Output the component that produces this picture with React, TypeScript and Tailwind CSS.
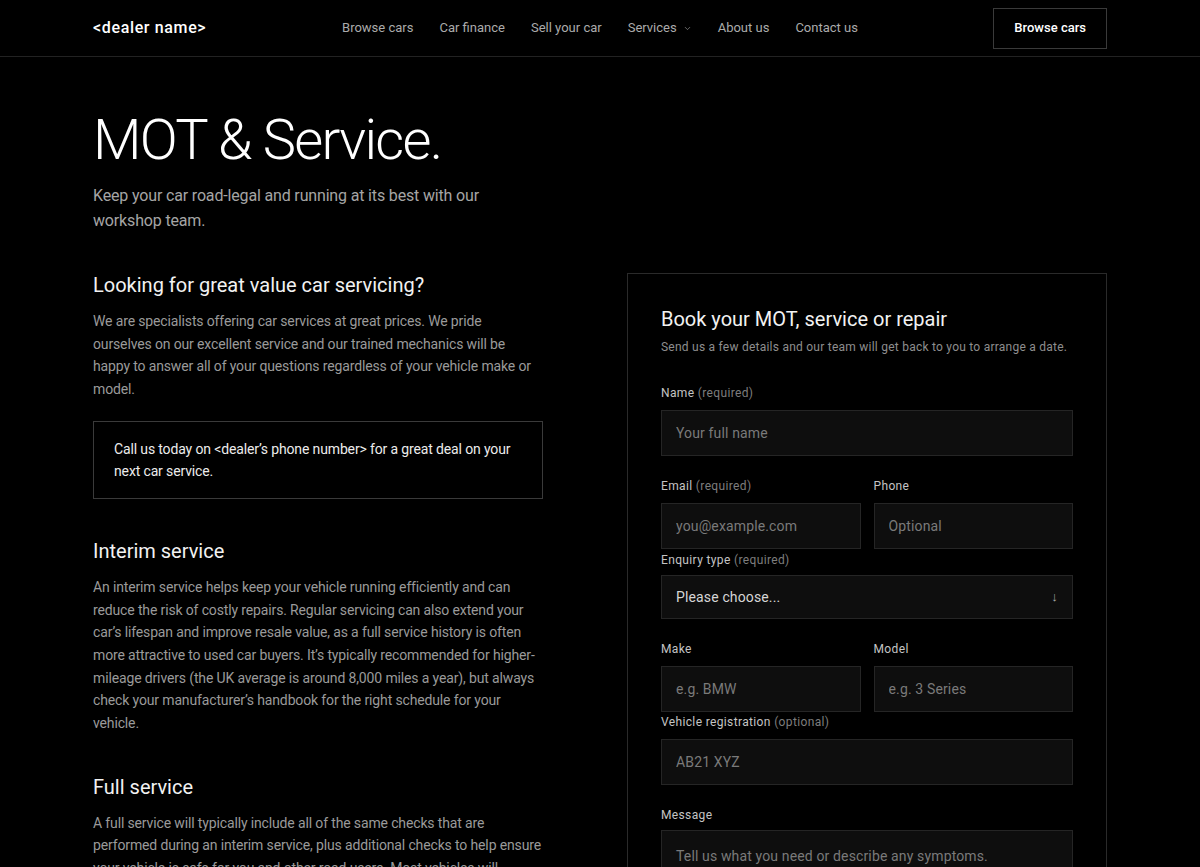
import { ChevronDown } from "lucide-react";

const navLinks = ["Browse cars", "Car finance", "Sell your car", "Services", "About us", "Contact us"];

function Label({ name, note, tight }: { name: string; note?: string; tight?: boolean }) {
  return (
    <label
      className={
        "block text-[12px] leading-4 text-[#c4c4c4] tracking-[0.03em] " + (tight ? "mb-[7px]" : "mb-[9px]")
      }
    >
      {name}
      {note && <span className="text-[#7d7d7d]"> {note}</span>}
    </label>
  );
}

function Field({ placeholder }: { placeholder: string }) {
  return (
    <input
      placeholder={placeholder}
      className="block w-full h-[46px] bg-[#0e0e0e] border border-[#252525] px-3.5 text-[14px] tracking-[0.01em] text-white placeholder:text-[#7a7a7a] outline-none"
    />
  );
}

function Header() {
  return (
    <header className="border-b border-[#222]">
      <div className="mx-auto w-[1014px] h-14 grid grid-cols-[1fr_auto_1fr] items-center">
        <a className="text-[16px] font-medium tracking-[0.04em] text-white">&lt;dealer name&gt;</a>
        <nav className="flex items-center gap-[26px] text-[13px] text-[#ababab]">
          {navLinks.map((l) => (
            <a key={l} className="flex items-center gap-1.5">
              {l}
              {l === "Services" && <ChevronDown size={9} strokeWidth={2} className="text-[#888]" />}
            </a>
          ))}
        </nav>
        <div className="flex justify-end">
          <button className="h-[41px] px-5 border border-[#3a3a3a] text-[13px] font-medium text-white">
            Browse cars
          </button>
        </div>
      </div>
    </header>
  );
}

const bodyText = "text-[14px] leading-[22.7px] text-[#9a9a9a] tracking-[-0.01em]";

function Intro() {
  return (
    <div className="flex flex-col gap-10">
      <section>
        <h2 className="text-[20px] leading-6 text-[#f2f2f2]">Looking for great value car servicing?</h2>
        <p className={"mt-[13px] " + bodyText}>
          We are specialists offering car services at great prices. We pride ourselves on our excellent service and
          our trained mechanics will be happy to answer all of your questions regardless of your vehicle make or
          model.
        </p>
        <div className="mt-5 border border-[#3a3a3a] px-5 py-4 text-[14px] leading-[22px] tracking-[-0.01em] text-[#ececec]">
          Call us today on &lt;dealer’s phone number&gt; for a great deal on your next car service.
        </div>
      </section>
      <section>
        <h2 className="text-[20px] leading-6 text-[#f2f2f2]">Interim service</h2>
        <p className={"mt-[13px] " + bodyText}>
          An interim service helps keep your vehicle running efficiently and can reduce the risk of costly repairs.
          Regular servicing can also extend your car’s lifespan and improve resale value, as a full service history is
          often more attractive to used car buyers. It’s typically recommended for higher-mileage drivers (the UK
          average is around 8,000 miles a year), but always check your manufacturer’s handbook for the right schedule
          for your vehicle.
        </p>
      </section>
      <section>
        <h2 className="text-[20px] leading-6 text-[#f2f2f2]">Full service</h2>
        <p className={"mt-[13px] " + bodyText}>
          A full service will typically include all of the same checks that are performed during an interim service,
          plus additional checks to help ensure your vehicle is safe for you and other road users. Most vehicles will
          require a full service every 12 months or 12,000 miles, whichever comes first.
        </p>
      </section>
    </div>
  );
}

function BookingForm() {
  return (
    <form className="border border-[#2a2a2a] p-[33px]">
      <h2 className="text-[20px] leading-6 text-[#f2f2f2]">Book your MOT, service or repair</h2>
      <p className="mt-2 text-[12px] leading-4 text-[#8e8e8e] tracking-[0.02em] whitespace-nowrap">
        Send us a few details and our team will get back to you to arrange a date.
      </p>

      <div className="mt-[30px] mb-[22px]">
        <Label name="Name" note="(required)" />
        <Field placeholder="Your full name" />
      </div>

      <div className="grid grid-cols-2 gap-[13px] mb-[3px]">
        <div>
          <Label name="Email" note="(required)" />
          <Field placeholder="you@example.com" />
        </div>
        <div>
          <Label name="Phone" />
          <Field placeholder="Optional" />
        </div>
      </div>

      <div className="mb-[22px]">
        <Label name="Enquiry type" note="(required)" tight />
        <div className="h-11 flex items-center justify-between bg-[#0e0e0e] border border-[#252525] px-3.5 text-[14px] tracking-[0.01em] text-[#d6d6d6]">
          <span>Please choose...</span>
          <span className="text-[13px] text-[#aaa]">↓</span>
        </div>
      </div>

      <div className="grid grid-cols-2 gap-[13px] mb-[2px]">
        <div>
          <Label name="Make" />
          <Field placeholder="e.g. BMW" />
        </div>
        <div>
          <Label name="Model" />
          <Field placeholder="e.g. 3 Series" />
        </div>
      </div>

      <div className="mb-[22px]">
        <Label name="Vehicle registration" note="(optional)" />
        <Field placeholder="AB21 XYZ" />
      </div>

      <div>
        <Label name="Message" tight />
        <textarea
          rows={5}
          placeholder="Tell us what you need or describe any symptoms."
          className="block w-full bg-[#0e0e0e] border border-[#252525] px-3.5 pt-[13px] pb-3 text-[14px] leading-6 tracking-[0.01em] text-white placeholder:text-[#7a7a7a] outline-none resize-none"
        />
      </div>
    </form>
  );
}

export default function App() {
  return (
    <div className="min-h-screen bg-black text-white font-['Roboto',sans-serif]">
      <Header />
      <main className="mx-auto w-[1014px] pt-[55px] pb-20">
        <h1 className="text-[56px] leading-[56px] font-light tracking-[-0.03em] text-white">MOT &amp; Service.</h1>
        <p className="mt-[15px] max-w-[420px] text-[16px] leading-[25px] tracking-[-0.01em] text-[#a5a5a5]">
          Keep your car road-legal and running at its best with our workshop team.
        </p>
        <div className="mt-10 grid grid-cols-[450px_480px] justify-between items-start">
          <Intro />
          <BookingForm />
        </div>
      </main>
    </div>
  );
}
